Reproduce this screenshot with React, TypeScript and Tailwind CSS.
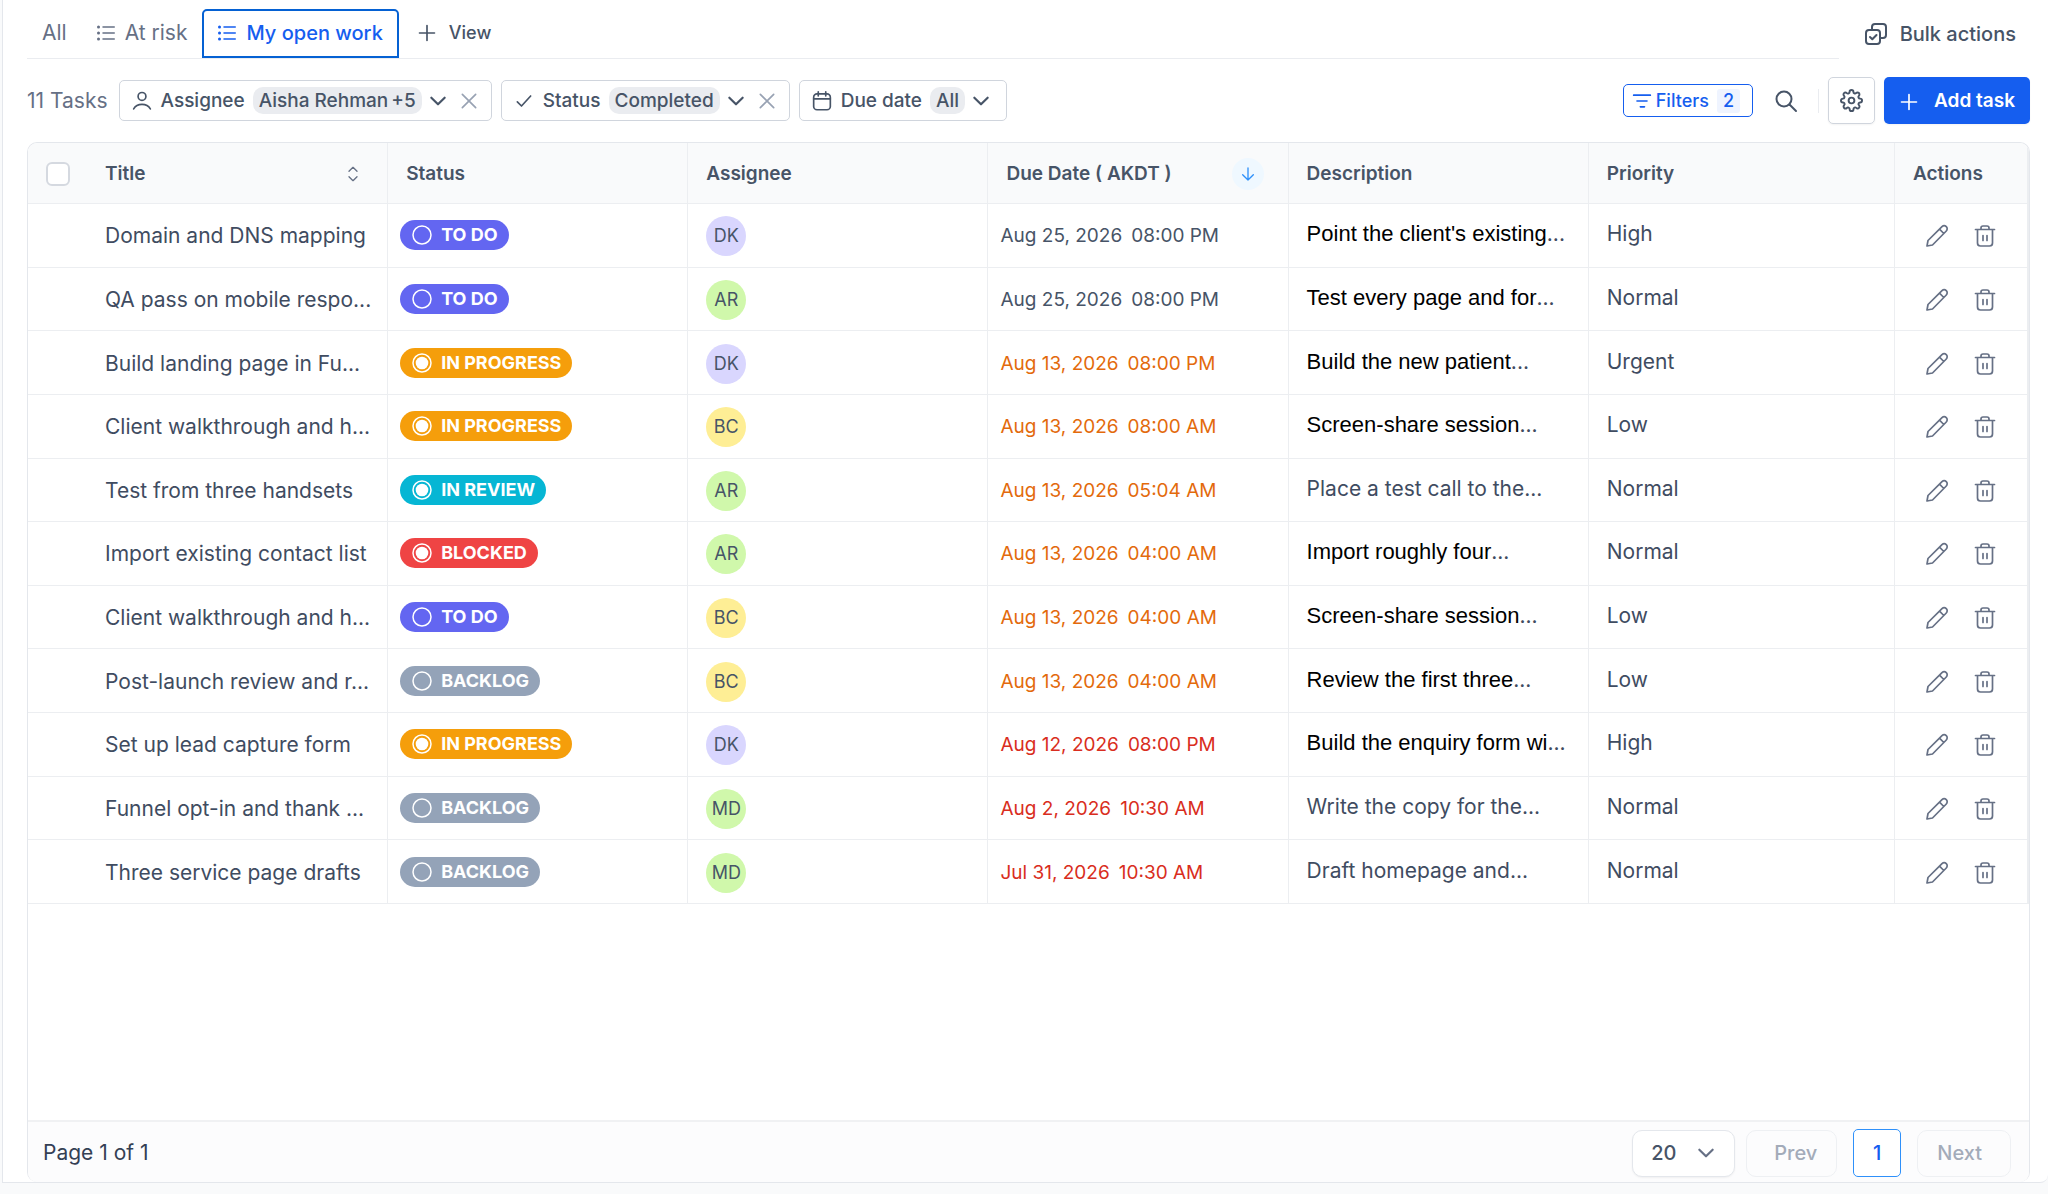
import type { ReactNode } from 'react';
import { FiSettings } from 'react-icons/fi';

type Status = 'TO DO' | 'IN PROGRESS' | 'IN REVIEW' | 'BLOCKED' | 'BACKLOG';

const statusColors: Record<Status, string> = {
  'TO DO': 'bg-[#6366f1]',
  'IN PROGRESS': 'bg-[#f59e0b]',
  'IN REVIEW': 'bg-[#06b6d4]',
  BLOCKED: 'bg-[#ef4444]',
  BACKLOG: 'bg-[#94a3b8]',
};

const avatarColors: Record<string, string> = {
  DK: 'bg-[#d9d6fe]',
  AR: 'bg-[#d0f8ab]',
  MD: 'bg-[#d0f8ab]',
  BC: 'bg-[#feee95]',
};

const dueColors = {
  later: 'text-[#475467]',
  soon: 'text-[#e36a0c]',
  overdue: 'text-[#d92d20]',
};

type Task = {
  title: string;
  status: Status;
  assignee: string;
  date: string;
  time: string;
  due: keyof typeof dueColors;
  description: string;
  // descriptions pasted as rich text keep their own font and colour
  pasted: boolean;
  priority: string;
};

const tasks: Task[] = [
  { title: 'Domain and DNS mapping', status: 'TO DO', assignee: 'DK', date: 'Aug 25, 2026', time: '08:00 PM', due: 'later', description: "Point the client's existing", pasted: true, priority: 'High' },
  { title: 'QA pass on mobile respo...', status: 'TO DO', assignee: 'AR', date: 'Aug 25, 2026', time: '08:00 PM', due: 'later', description: 'Test every page and for', pasted: true, priority: 'Normal' },
  { title: 'Build landing page in Fu...', status: 'IN PROGRESS', assignee: 'DK', date: 'Aug 13, 2026', time: '08:00 PM', due: 'soon', description: 'Build the new patient', pasted: true, priority: 'Urgent' },
  { title: 'Client walkthrough and h...', status: 'IN PROGRESS', assignee: 'BC', date: 'Aug 13, 2026', time: '08:00 AM', due: 'soon', description: 'Screen-share session', pasted: true, priority: 'Low' },
  { title: 'Test from three handsets', status: 'IN REVIEW', assignee: 'AR', date: 'Aug 13, 2026', time: '05:04 AM', due: 'soon', description: 'Place a test call to the', pasted: false, priority: 'Normal' },
  { title: 'Import existing contact list', status: 'BLOCKED', assignee: 'AR', date: 'Aug 13, 2026', time: '04:00 AM', due: 'soon', description: 'Import roughly four', pasted: true, priority: 'Normal' },
  { title: 'Client walkthrough and h...', status: 'TO DO', assignee: 'BC', date: 'Aug 13, 2026', time: '04:00 AM', due: 'soon', description: 'Screen-share session', pasted: true, priority: 'Low' },
  { title: 'Post-launch review and r...', status: 'BACKLOG', assignee: 'BC', date: 'Aug 13, 2026', time: '04:00 AM', due: 'soon', description: 'Review the first three', pasted: true, priority: 'Low' },
  { title: 'Set up lead capture form', status: 'IN PROGRESS', assignee: 'DK', date: 'Aug 12, 2026', time: '08:00 PM', due: 'overdue', description: 'Build the enquiry form wi', pasted: true, priority: 'High' },
  { title: 'Funnel opt-in and thank ...', status: 'BACKLOG', assignee: 'MD', date: 'Aug 2, 2026', time: '10:30 AM', due: 'overdue', description: 'Write the copy for the', pasted: false, priority: 'Normal' },
  { title: 'Three service page drafts', status: 'BACKLOG', assignee: 'MD', date: 'Jul 31, 2026', time: '10:30 AM', due: 'overdue', description: 'Draft homepage and', pasted: false, priority: 'Normal' },
];

function Icon({ size = 'size-5', weight = 2, children }: { size?: string; weight?: number; children: ReactNode }) {
  return (
    <svg
      viewBox="0 0 24 24"
      className={`${size} shrink-0`}
      fill="none"
      stroke="currentColor"
      strokeWidth={weight}
      strokeLinecap="round"
      strokeLinejoin="round"
      aria-hidden="true"
    >
      {children}
    </svg>
  );
}

function ListIcon() {
  return (
    <Icon size="size-[18px]">
      <path d="M8 4h15M8 12h15M8 20h15" />
      <path strokeWidth="4" d="M2 4h.01M2 12h.01M2 20h.01" />
    </Icon>
  );
}

function PlusIcon() {
  return (
    <Icon size="size-5">
      <path d="M12 3v18M3 12h18" />
    </Icon>
  );
}

function ChevronIcon() {
  return (
    <Icon size="size-5" weight={2.6}>
      <path d="M4 8l8 8 8-8" />
    </Icon>
  );
}

function FilterChip({
  icon,
  label,
  value,
  extra,
  removable,
}: {
  icon: ReactNode;
  label: string;
  value: string;
  extra?: string;
  removable?: boolean;
}) {
  return (
    <div
      className={`flex h-[41px] items-center rounded-[5px] border border-[#d0d5dd] bg-white pl-3 text-[19px] font-medium ${
        removable ? 'pr-3' : 'pr-[15px]'
      }`}
    >
      <button type="button" className="flex items-center">
        {icon}
        <span className="ml-[9px] pt-0.5">{label}</span>
        <span className="ml-2 flex h-[27px] items-center gap-[3px] rounded-[10px] bg-[#eaecf0] px-1.5 pt-0.5">
          {value}
          {extra && <span>{extra}</span>}
        </span>
        <span className="ml-1.5">
          <ChevronIcon />
        </span>
      </button>
      {removable && (
        <button type="button" aria-label={`Remove ${label} filter`} className="ml-[11px] text-[#98a2b3]">
          <Icon size="size-5">
            <path d="M4 4l16 16M20 4L4 20" />
          </Icon>
        </button>
      )}
    </div>
  );
}

function StatusBadge({ status }: { status: Status }) {
  const started = status !== 'TO DO' && status !== 'BACKLOG';
  return (
    <span className={`inline-flex h-[30px] items-center gap-[9px] rounded-full pr-[11px] pl-3 text-[18px] font-bold text-white ${statusColors[status]}`}>
      <svg viewBox="0 0 20 20" className="size-5" fill="none" aria-hidden="true">
        <circle cx="10" cy="10" r="9" stroke="currentColor" strokeWidth="1.5" />
        {started && <circle cx="10" cy="10" r="6.3" fill="currentColor" />}
      </svg>
      {status}
    </span>
  );
}

function Toolbar() {
  return (
    <div className="mt-[18px] flex items-center justify-between pr-[18px]">
      <div className="flex items-center gap-[9px]">
        <span className="mr-0.5 text-[21px] text-[#667085]">11 Tasks</span>
        <FilterChip
          icon={
            <Icon size="size-5">
              <circle cx="12" cy="6.500" r="4.700" />
              <path d="M2 21.500c2-3.700 5.700-5.500 10-5.500s8 1.800 10 5.500" />
            </Icon>
          }
          label="Assignee"
          value="Aisha Rehman"
          extra="+5"
          removable
        />
        <FilterChip
          icon={
            <Icon size="size-5">
              <path d="M4 13l5 5L20 6" />
            </Icon>
          }
          label="Status"
          value="Completed"
          removable
        />
        <FilterChip
          icon={
            <Icon size="size-5">
              <rect x="2" y="3.500" width="20" height="19" rx="4" />
              <path d="M2 9.500h20M7.500 1v5M16.500 1v5" />
            </Icon>
          }
          label="Due date"
          value="All"
        />
      </div>

      <div className="flex items-center">
        <button
          type="button"
          className="flex h-[33px] items-center rounded-[5px] border border-[#155eef] pr-3 pl-2 text-[18px] font-medium text-[#155eef]"
        >
          <Icon size="size-5">
            <path d="M2 5h20M6 12h12M10 19h5" />
          </Icon>
          <span className="ml-1">Filters</span>
          <span className="ml-2 rounded-[3px] bg-[#eff4ff] px-1.5 leading-6">2</span>
        </button>
        <button type="button" aria-label="Search" className="ml-[21px] text-[#475467]">
          <Icon size="size-6">
            <circle cx="10" cy="10" r="7.500" />
            <path d="M15.500 15.500L22 22" />
          </Icon>
        </button>
        <span className="ml-5 h-6 w-px bg-[#eaecf0]" />
        <button
          type="button"
          aria-label="Table settings"
          className="ml-[9px] flex size-[47px] items-center justify-center rounded-[5px] border border-[#d0d5dd] shadow-xs"
        >
          <FiSettings className="size-[23px]" />
        </button>
        <button
          type="button"
          className="ml-[9px] flex h-[47px] items-center gap-[15px] rounded-[5px] bg-[#155eef] px-[15px] pt-0.5 text-[19px] font-semibold text-white shadow-xs"
        >
          <PlusIcon />
          Add task
        </button>
      </div>
    </div>
  );
}

function TaskTable() {
  const head = 'border-r border-b border-[#eceef1] px-[18px] pt-0.5 text-left text-[19px] font-semibold text-[#475467]';
  const cell = 'border-r border-b border-[#eceef1] whitespace-nowrap';

  return (
    <table className="h-[761px] w-full table-fixed border-separate border-spacing-0">
      <colgroup>
        <col className="w-[18%]" />
        <col className="w-[15%]" />
        <col className="w-[15%]" />
        <col className="w-[15%]" />
        <col className="w-[15%]" />
        <col />
        <col className="w-[134px]" />
      </colgroup>
      <thead>
        <tr className="h-[61px] bg-[#f9fafb]">
          <th className={head}>
            <div className="flex items-center pr-2">
              <input
                type="checkbox"
                aria-label="Select all tasks"
                className="size-6 appearance-none rounded-md border-2 border-[#d5d9e0] bg-white"
              />
              <span className="ml-[35px] flex-1">Title</span>
              <button type="button" aria-label="Sort by title" className="text-[#667085]">
                <Icon size="size-4">
                  <path d="M6 8l6-6 6 6M6 16l6 6 6-6" />
                </Icon>
              </button>
            </div>
          </th>
          <th className={head}>Status</th>
          <th className={head}>Assignee</th>
          <th className={head}>
            <div className="flex items-center justify-between pr-1.5">
              Due Date ( AKDT )
              <button
                type="button"
                aria-label="Sorted by due date, newest first"
                className="flex size-8 items-center justify-center rounded-full bg-[#eff8ff] text-[#2e90fa]"
              >
                <Icon size="size-4">
                  <path d="M12 3v18M4 13l8 8 8-8" />
                </Icon>
              </button>
            </div>
          </th>
          <th className={head}>Description</th>
          <th className={head}>Priority</th>
          <th className={`${head} border-r-2`}>Actions</th>
        </tr>
      </thead>
      <tbody className="text-[21px] leading-7 text-[#3f4c61]">
        {tasks.map((task, i) => (
          <tr key={i}>
            <td className={`${cell} pt-0.5 pl-[77px]`}>{task.title}</td>
            <td className={`${cell} pl-3`}>
              <div className="flex">
                <StatusBadge status={task.status} />
              </div>
            </td>
            <td className={`${cell} pt-0.5 pl-[18px]`}>
              <span className={`flex size-10 items-center justify-center rounded-full text-[18px] text-[#475467] ${avatarColors[task.assignee]}`}>
                {task.assignee}
              </span>
            </td>
            <td className={`${cell} pt-0.5 pl-3 text-[19px] ${dueColors[task.due]}`}>
              <span className="mr-[9px]">{task.date}</span>
              <span>{task.time}</span>
            </td>
            <td className={`${cell} px-[18px] pb-0.5`}>
              <span className={task.pasted ? "font-['Liberation_Sans',Arial,sans-serif] text-[22px] text-black" : ''}>{task.description}</span>...
            </td>
            <td className={`${cell} px-[18px] pb-0.5`}>{task.priority}</td>
            <td className={`${cell} border-r-2 pt-0.5 pl-[30px]`}>
              <div className="flex items-center gap-6 text-[#667085]">
                <button type="button" aria-label={`Edit ${task.title}`}>
                  <Icon size="size-6" weight={1.7}>
                    <path d="M2 22l1-5.500L17 2.700a3 3 0 0 1 4.300 4.300L7.500 21 2 22zM14.500 5.200l4.300 4.300" />
                  </Icon>
                </button>
                <button type="button" aria-label={`Delete ${task.title}`}>
                  <Icon size="size-6" weight={1.7}>
                    <path d="M2.500 5.500h19M8 5.500V4a2 2 0 0 1 2-2h4a2 2 0 0 1 2 2v1.500M4.500 5.500V19a3 3 0 0 0 3 3h9a3 3 0 0 0 3-3V5.500M10 11.500v5M14 11.500v5" />
                  </Icon>
                </button>
              </div>
            </td>
          </tr>
        ))}
      </tbody>
    </table>
  );
}

function Pagination() {
  return (
    <div className="flex h-[62px] items-center justify-between border-t-2 border-[#f0f1f3] bg-[#fcfcfd] pt-0.5 pr-[18px] pl-[15px] text-[20px]">
      <span className="text-[21px] text-[#344054]">Page 1 of 1</span>
      <div className="flex items-center font-medium">
        <div className="relative flex items-center">
          <select
            aria-label="Tasks per page"
            className="h-[47px] w-[103px] appearance-none rounded-[10px] border border-[#e4e7ec] bg-white pl-[18px] text-[#475467] shadow-xs"
          >
            <option>20</option>
          </select>
          <span className="pointer-events-none absolute right-[19px] text-[#667085]">
            <ChevronIcon />
          </span>
        </div>
        <button type="button" disabled className="ml-[11px] h-[47px] rounded-[10px] border border-[#eef0f3] pr-[19px] pl-[27px] text-[#a3abb9]">
          Prev
        </button>
        <button type="button" aria-current="page" className="ml-4 size-12 rounded-[5px] border border-[#2e90fa] bg-white text-[#155eef]">
          1
        </button>
        <button type="button" disabled className="ml-4 h-[47px] rounded-[10px] border border-[#eef0f3] pr-7 pl-[19px] text-[#a3abb9]">
          Next
        </button>
      </div>
    </div>
  );
}

export default function App() {
  return (
    <div className="flex min-h-screen flex-col bg-[#f9fafb] pb-[11px] pl-0.5 font-['Inter',sans-serif] text-[#475467]">
      <main className="flex flex-1 flex-col rounded-br-lg border-b border-l border-[#e4e7ec] bg-white pl-6">
        {/* Saved views */}
        <header className="flex pt-[9px]">
          <nav className="flex h-[50px] flex-1 border-b border-[#eaecf0] text-[20px] text-[#667085]">
            <button type="button" className="px-[15px] pb-0.5 text-[21px]">
              All
            </button>
            <button type="button" className="flex items-center gap-2.5 px-[15px] pb-0.5 text-[21px]">
              <ListIcon />
              At risk
            </button>
            <button
              type="button"
              className="flex items-center gap-2.5 rounded-t-[5px] border-2 border-[#0561d3] px-3.5 pb-0.5 font-medium text-[#155eef]"
            >
              <ListIcon />
              My open work
            </button>
            <button type="button" className="ml-[18px] flex items-center gap-3 pb-0.5 text-[18px] font-medium text-[#475467]">
              <PlusIcon />
              View
            </button>
          </nav>
          <button type="button" className="ml-[25px] flex h-[50px] items-center gap-3 pr-8 text-[20px] font-medium">
            <Icon size="size-6">
              <rect x="2" y="8" width="14" height="14" rx="3" />
              <path d="M8 8V5a3 3 0 0 1 3-3h8a3 3 0 0 1 3 3v8a3 3 0 0 1-3 3h-3M6 15l2.300 2.300L12.500 13" />
            </Icon>
            Bulk actions
          </button>
        </header>

        <Toolbar />

        <section className="mt-[18px] mr-[18px] flex flex-1 flex-col overflow-hidden rounded-[10px] border border-b-0 border-[#e4e7ec]">
          <TaskTable />
          <div className="flex-1" />
          <Pagination />
        </section>
      </main>
    </div>
  );
}
